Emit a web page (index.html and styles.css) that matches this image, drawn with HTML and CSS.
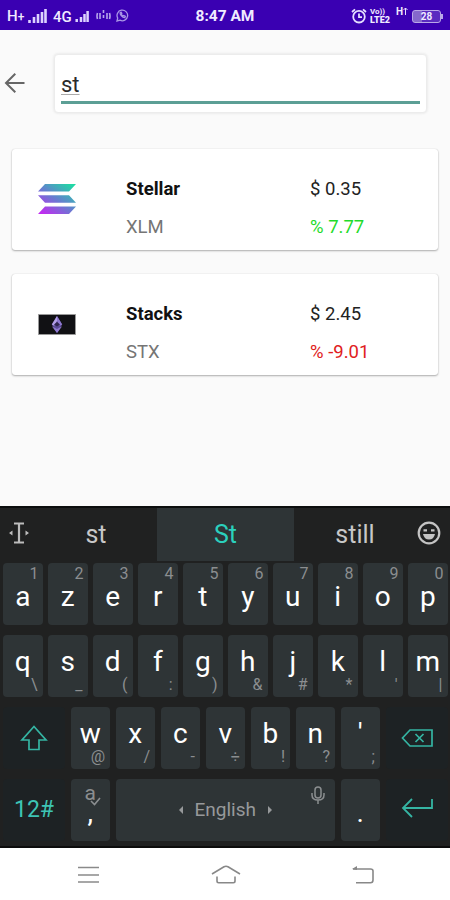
FILE: index.html
```html
<!DOCTYPE html>
<html>

<head>
    <meta charset="utf-8">
    <title>Coin Search</title>
    <link rel="stylesheet" href="styles.css">
</head>

<body>
    <div class="statusBar">
        <div class="statusLeft">
            <span class="network">H<small>+</small></span>
            <svg class="signal" width="19" height="16" viewBox="0 0 19 16">
                <path d="M1.5 15v-3M6 15V9M10 15V6M14 15V4M17.5 15V1" stroke="#dcd2ff" stroke-width="2.6" />
            </svg>
            <span class="network second">4G</span>
            <svg class="signal" width="14" height="13" viewBox="0 0 14 13">
                <path d="M1.7 12V9M6 12V7M9.5 12V4M12.6 12V1" stroke="#dcd2ff" stroke-width="2.5" />
            </svg>
            <svg class="hotspot" width="15" height="14" viewBox="0 0 15 14" fill="none" stroke="#b6a5ea" stroke-width="1.6">
                <path d="M1.5 4q-1 3 0 6M4 4v6M7.5 1v3M7.5 6v3M11 4v6M13.5 4q1 3 0 6" />
            </svg>
            <svg class="whatsapp" width="13" height="13" viewBox="0 0 13 13" fill="none" stroke="#a995e6" stroke-width="1.3">
                <path d="M1 12l.7-3A5.3 5.3 0 1 1 4 11.2zM4.3 3.5c-.7 2 2.2 5.4 4.5 5.2l.5-1.4-1.6-.8-.8.7-1.6-1.8.5-.9-.6-1.3z" />
            </svg>
        </div>
        <div class="clock">8:47 AM</div>
        <div class="statusRight">
            <svg width="16" height="16" viewBox="0 0 16 16" fill="none" stroke="#e6dfff" stroke-width="1.8">
                <circle cx="8" cy="8.7" r="5.8" />
                <path d="M8 5.5v3.7h3M1 4l3-2.7M15 4l-3-2.7" />
            </svg>
            <div class="volte"><span>Vo))</span><b>LTE2</b></div>
            <span class="data">H<svg width="5" height="8" viewBox="0 0 5 8" fill="none" stroke="#e6dfff"><path d="M2.5 8V1M.5 3l2-2 2 2" /></svg></span>
            <div class="battery">28</div>
        </div>
    </div>

    <div class="searchHeader">
        <svg class="backArrow" width="22" height="22" viewBox="0 0 22 22" fill="none" stroke="#666" stroke-width="2">
            <path d="M20.5 11H2.5M11.3 1.8L2 11l9.3 9.2" />
        </svg>
        <div class="searchBox">
            <div class="searchInput"><span>st</span></div>
        </div>
    </div>

    <div class="coinList">
        <div class="coinCard">
            <svg class="coinIcon" width="40" height="32" viewBox="0 0 40 32">
                <defs>
                    <linearGradient id="sol" gradientUnits="userSpaceOnUse" x1="8" y1="32" x2="31" y2="-1">
                        <stop offset="0" stop-color="#c02cf0" />
                        <stop offset=".5" stop-color="#647fcf" />
                        <stop offset="1" stop-color="#1fd9a4" />
                    </linearGradient>
                </defs>
                <path fill="url(#sol)" d="M8 1h31l-7 7.5H1zM1 12.2h31l7 7.5H8zM8 23.5h31l-7 7.5H1z" />
            </svg>
            <div class="coinName">
                <b>Stellar</b>
                <span>XLM</span>
            </div>
            <div class="coinPrice">
                <span>$ 0.35</span>
                <span class="up">% 7.77</span>
            </div>
        </div>
        <div class="coinCard">
            <svg class="coinIcon" width="40" height="32" viewBox="0 0 40 32">
                <path fill="#111114" stroke="#999" d="M1.5 6.5h37v20h-37z" />
                <path fill="#5b4b96" d="M20 8l5.2 8.5L20 25l-5.2-8.5z" />
                <path fill="#b3a0e6" d="M20 8l-5.2 8.5 2.4 1.2L20 13z" />
                <path fill="#8e78cf" d="M20 8l5.2 8.5-2.4 1.2L20 13zM14.8 18.2L20 25l5.2-6.8L20 21z" />
                <path fill="#30264f" d="M20 14l3 2.5-3 2-3-2z" />
            </svg>
            <div class="coinName">
                <b>Stacks</b>
                <span>STX</span>
            </div>
            <div class="coinPrice">
                <span>$ 2.45</span>
                <span class="down">% -9.01</span>
            </div>
        </div>
    </div>

    <div class="keyboard">
        <div class="suggestions">
            <svg class="cursorIcon" width="20" height="22" viewBox="0 0 20 22" fill="none" stroke="#bcbcbc" stroke-width="2.2">
                <path d="M5 1.5h10M5 20.5h10M10 2v18" />
                <path fill="#bcbcbc" stroke="none" d="M0 11l3.5-2.5v5zM20 11l-3.5-2.5v5z" />
            </svg>
            <span class="suggestion">st</span>
            <span class="suggestion active">St</span>
            <span class="suggestion last">still</span>
            <svg class="smiley" width="24" height="24" viewBox="0 0 24 24" fill="none" stroke="#c4c4c4" stroke-width="2.2">
                <circle cx="12" cy="12" r="10.3" />
                <path d="M6.5 9.3h3.5M14 9.3h3.5" />
                <path fill="#c4c4c4" stroke="none" d="M6 13h12q-1.2 5.5-6 5.5T6 13z" />
            </svg>
        </div>

        <div class="keyRow top">
            <div class="key">a<i>1</i></div>
            <div class="key">z<i>2</i></div>
            <div class="key">e<i>3</i></div>
            <div class="key">r<i>4</i></div>
            <div class="key">t<i>5</i></div>
            <div class="key">y<i>6</i></div>
            <div class="key">u<i>7</i></div>
            <div class="key">i<i>8</i></div>
            <div class="key">o<i>9</i></div>
            <div class="key">p<i>0</i></div>
        </div>

        <div class="keyRow">
            <div class="key">q<i>\</i></div>
            <div class="key">s<i>_</i></div>
            <div class="key">d<i>(</i></div>
            <div class="key">f<i>:</i></div>
            <div class="key">g<i>)</i></div>
            <div class="key">h<i>&amp;</i></div>
            <div class="key">j<i>#</i></div>
            <div class="key">k<i>*</i></div>
            <div class="key">l<i>'</i></div>
            <div class="key">m<i>|</i></div>
        </div>

        <div class="keyRow">
            <div class="key wide">
                <svg width="28" height="26" viewBox="0 0 28 26" fill="none" stroke="#35b5a3" stroke-width="1.7">
                    <path d="M14 1.5L26 15h-7v9.5H9V15H2z" />
                </svg>
            </div>
            <div class="key">w<i>@</i></div>
            <div class="key">x<i>/</i></div>
            <div class="key">c<i>-</i></div>
            <div class="key">v<i>÷</i></div>
            <div class="key">b<i>!</i></div>
            <div class="key">n<i>?</i></div>
            <div class="key">'<i>;</i></div>
            <div class="key wide">
                <svg width="32" height="18" viewBox="0 0 32 18" fill="none" stroke="#35b5a3" stroke-width="1.7">
                    <path d="M9 1h22v16H9L1.5 9zM14.5 5l8 8M22.5 5l-8 8" />
                </svg>
            </div>
        </div>

        <div class="keyRow bottom">
            <div class="key wide mode">12#</div>
            <div class="key comma">,
                <i>a</i>
                <svg width="11" height="9" viewBox="0 0 11 9" fill="none" stroke="#8b8e90" stroke-width="1.6">
                    <path d="M1 4l3.5 3.5L10 1" />
                </svg>
            </div>
            <div class="key space">
                <span class="arrow left"></span>English<span class="arrow right"></span>
                <svg width="14" height="19" viewBox="0 0 14 19" fill="none" stroke="#8b8e90" stroke-width="1.5">
                    <rect x="4" y="1" width="6" height="11" rx="3" />
                    <path d="M1 7v2q0 5 6 5t6-5V7M7 14v4" />
                </svg>
            </div>
            <div class="key dot">.</div>
            <div class="key wide enter">
                <svg width="32" height="20" viewBox="0 0 32 20" fill="none" stroke="#35b5a3" stroke-width="1.8">
                    <path d="M31 1v9H2M11 1l-9 9 9 9" />
                </svg>
            </div>
        </div>
    </div>

    <div class="navBar">
        <svg width="21" height="18" viewBox="0 0 21 18" stroke="#8a8a8a" stroke-width="1.7">
            <path d="M0 1.5h21M0 9h21M0 16h21" />
        </svg>
        <svg width="30" height="19" viewBox="0 0 30 19" fill="none" stroke="#888" stroke-width="1.6">
            <path d="M1 9L13 1.8q2-1 4 0L29 9M6 11.5V16q0 1.7 1.7 1.7h14.6q1.7 0 1.7-1.7v-4.5" />
        </svg>
        <svg width="22" height="18" viewBox="0 0 22 18" fill="none" stroke="#888" stroke-width="1.6">
            <path d="M1 3h17.5Q21 3 21 5v9q0 2.7-2.5 2.7H4" />
            <path fill="#888" stroke="none" d="M0 3l5-3v4z" />
        </svg>
    </div>
</body>

</html>
```
FILE: styles.css
```css
* {
    box-sizing: border-box;
}
body {
    margin: 0;
    width: 450px;
    height: 900px;
    display: flex;
    flex-direction: column;
    overflow: hidden;
    background-color: #fafafa;
    font-family: Roboto, sans-serif;
}
svg {
    display: block;
    flex: none;
}

/* status bar */
.statusBar {
    display: grid;
    grid-template-columns: 1fr auto 1fr;
    height: 30px;
    padding: 2px 7px 0;
    align-items: center;
    background-color: #3a00b2;
    color: #f0ebff;
}
.statusLeft, .statusRight {
    display: flex;
    align-items: center;
}
.statusRight {
    justify-content: flex-end;
}
.network {
    width: 21px;
    padding-top: 1px;
    font-size: 15px;
    font-weight: 500;
    line-height: 16px;
    white-space: nowrap;
}
.network small {
    font-size: 12px;
}
.network.second {
    width: 22px;
    margin-left: 6px;
}
.hotspot {
    margin-left: 7px;
}
.whatsapp {
    margin-left: 5px;
    margin-top: -2px;
}
.clock {
    font-size: 15.5px;
    font-weight: bold;
}
.volte {
    display: flex;
    flex-direction: column;
    width: 24px;
    margin-left: 3px;
    font-size: 8px;
    line-height: 9px;
    font-weight: bold;
}
.volte b {
    font-size: 9px;
}
.data {
    display: flex;
    width: 14px;
    margin: -8px 0 0 2px;
    font-size: 10px;
    font-weight: bold;
    line-height: 10px;
}
.battery {
    position: relative;
    width: 29px;
    height: 13px;
    margin: 0 2px 0 2px;
    border: 1px solid #b9a7e8;
    border-radius: 3px;
    background: linear-gradient(90deg, #8668cc 35%, #5a2bc0 35%);
    font-size: 10px;
    font-weight: bold;
    line-height: 11px;
    text-align: center;
}
.battery::after {
    content: "";
    position: absolute;
    top: 3px;
    right: -3px;
    width: 2px;
    height: 5px;
    background-color: #b9a7e8;
}

/* search */
.searchHeader {
    display: flex;
    align-items: center;
    margin-top: 24px;
    padding-left: 4px;
}
.backArrow {
    margin-top: -2px;
}
.searchBox {
    width: 373px;
    height: 59px;
    margin-left: 28px;
    padding: 7px 6px 9px 6px;
    border: 1px solid #ececec;
    border-radius: 4px;
    background-color: #fff;
    box-shadow: 0 0 2px 1px #ededed;
}
.searchInput {
    height: 42px;
    border-bottom: 3px solid #5c9f95;
    color: #2b2b2b;
    font-size: 22px;
    line-height: 46px;
}
.searchInput span {
    text-decoration: underline;
    text-decoration-color: #aaa;
    text-decoration-thickness: 1px;
    text-underline-offset: 2px;
}

/* coins */
.coinList {
    display: flex;
    flex-direction: column;
    gap: 24px;
    padding: 36px 12px 0;
}
.coinCard {
    display: flex;
    height: 101px;
    padding-left: 25px;
    border-radius: 3px;
    background-color: #fff;
    box-shadow: 0 1px 2px rgba(0, 0, 0, .3), 0 0 1px rgba(0, 0, 0, .2);
}
.coinIcon {
    margin-top: 34px;
}
.coinName, .coinPrice {
    display: flex;
    flex-direction: column;
    padding-top: 21px;
    font-size: 18.5px;
    line-height: 38px;
}
.coinName {
    width: 184px;
    margin-left: 49px;
    color: #757575;
}
.coinName b {
    color: #111;
    font-size: 18.5px;
}
.coinPrice {
    color: #222;
}
.up {
    color: #1fdb2b;
}
.down {
    color: #e02020;
}

/* keyboard */
.keyboard {
    height: 342px;
    margin-top: auto;
    border-top: 2px solid #0c0e0e;
    border-bottom: 2px solid #0c0c0c;
    background-color: #202121;
}
.suggestions {
    display: flex;
    align-items: center;
    height: 52px;
    margin-bottom: 3px;
    padding-left: 9px;
    color: #c8c8c8;
    font-size: 25px;
}
.cursorIcon {
    margin-top: -3px;
    margin-right: 6px;
}
.suggestion {
    width: 122px;
    line-height: 53px;
    text-align: center;
}
.suggestion.active {
    width: 137px;
    background-color: #2e3436;
    color: #2bd0bd;
}
.smiley {
    margin-top: -3px;
    margin-left: 1px;
}
.keyRow {
    display: flex;
    gap: 5.5px;
    margin-bottom: 10px;
    padding-left: 3px;
}
.key {
    position: relative;
    flex: none;
    width: 39.5px;
    height: 62px;
    border-radius: 4px;
    background-color: #2e3436;
    color: #fff;
    font-size: 28px;
    line-height: 54px;
    text-align: center;
}
.key i {
    position: absolute;
    right: 5px;
    bottom: 3px;
    color: #8b8e90;
    font-size: 16px;
    font-style: normal;
    line-height: 18px;
}
.top .key {
    line-height: 68px;
}
.top .key i {
    top: 2px;
    right: 4px;
    bottom: auto;
}
.key.wide {
    display: flex;
    width: 62px;
    align-items: center;
    justify-content: center;
    background-color: #1d2224;
}
.key.mode {
    color: #3dc4b4;
    font-size: 23px;
}
.key.comma, .key.dot {
    line-height: 68px;
}
.key.comma i {
    top: 3px;
    right: 14px;
    bottom: auto;
    font-size: 21px;
    line-height: 22px;
}
.key.comma svg {
    position: absolute;
    top: 18px;
    right: 9px;
}
.key.space {
    display: flex;
    width: 219.5px;
    align-items: center;
    justify-content: center;
    gap: 12px;
    color: #97999b;
    font-size: 19px;
}
.key.space svg {
    position: absolute;
    top: 7px;
    right: 10px;
}
.arrow {
    border: 4px solid transparent;
}
.arrow.left {
    border-left-width: 0;
    border-right-color: #97999b;
}
.arrow.right {
    border-right-width: 0;
    border-left-color: #97999b;
}
.key.enter {
    padding-bottom: 4px;
}

/* navigation buttons */
.navBar {
    display: flex;
    flex: none;
    height: 52px;
    align-items: center;
    justify-content: space-between;
    padding: 1px 76px 0 78px;
    background-color: #fff;
}
```
